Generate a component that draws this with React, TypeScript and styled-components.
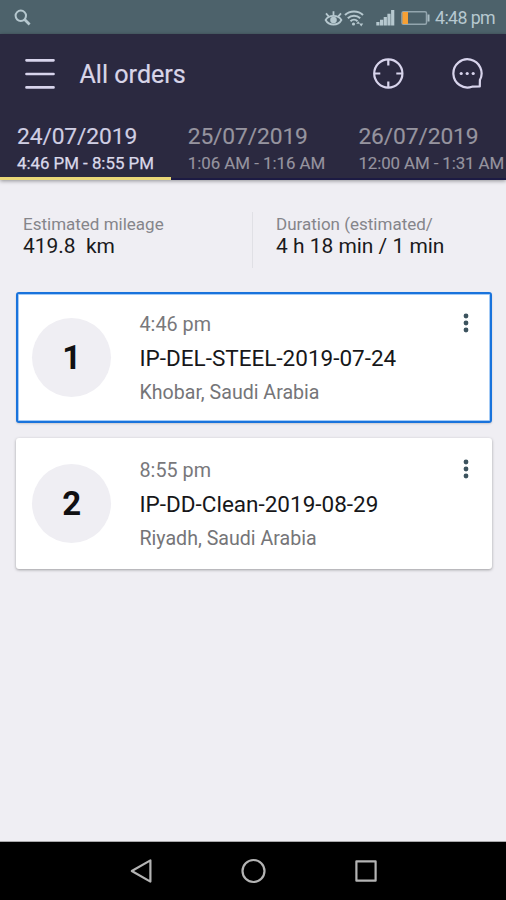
import React from 'react';
import styled, { createGlobalStyle } from 'styled-components';

const GlobalStyle = createGlobalStyle`
  *, *::before, *::after { box-sizing: border-box; }
  body { margin: 0; background: #efeef3; font-family: Roboto, sans-serif; }
`;

const Screen = styled.div`
  width: 506px;
  height: 900px;
  display: flex;
  flex-direction: column;
  overflow: hidden;
  background: #efeef3;
`;

const StatusBar = styled.div`
  flex: none;
  height: 34px;
  padding: 1px 11px 0 14px;
  display: flex;
  align-items: center;
  justify-content: space-between;
  background: #4d626b;
  color: #b6c8cf;
`;

const StatusIcons = styled.div`
  display: flex;
  align-items: center;
`;

const SignalSlot = styled.span`
  display: flex;
  margin: 0 6px 0 12px;
`;

const Clock = styled.span`
  width: 60px;
  margin-left: 5px;
  padding-top: 1px;
  font-size: 17.8px;
  line-height: 22px;
  letter-spacing: -0.6px;
  white-space: nowrap;
`;

const Header = styled.header`
  flex: none;
  height: 146px;
  background: #2b2940;
  box-shadow: 0 1px 4px rgba(0, 0, 0, 0.4);
`;

const AppBar = styled.div`
  height: 80px;
  display: flex;
  align-items: center;
  padding: 0 23px 0 24px;
  color: #d8d4ec;
`;

const Title = styled.h1`
  flex: 1;
  margin: 2px 0 0 23.5px;
  font-size: 25.1px;
  line-height: 32px;
  font-weight: 400;
  -webkit-text-stroke: 0.2px;
  color: #d8d5e8;
`;

const IconButton = styled.button`
  display: flex;
  padding: 0;
  border: 0;
  background: none;
  color: inherit;
  & + & { margin-left: 47px; }
`;

const Tabs = styled.div`
  height: 66px;
  display: flex;
`;

const Tab = styled.div<{ $active?: boolean }>`
  flex: none;
  width: 170.7px;
  padding: 9px 0 0 17px;
  white-space: nowrap;
  color: ${(p) => (p.$active ? '#cfcee3' : '#96949f')};
  border-bottom: ${(p) => (p.$active ? '3px solid #ead778' : '2px solid #1c1a43')};
`;

const TabDate = styled.div`
  font-size: 22.8px;
  line-height: 27px;
  letter-spacing: -0.12px;
  -webkit-text-stroke: 0.15px;
`;

const TabHours = styled.div<{ $narrow?: boolean; $active?: boolean }>`
  margin-top: 1px;
  font-size: 16.9px;
  line-height: 24px;
  letter-spacing: ${(p) => (p.$narrow ? '-0.1px' : '-0.03px')};
  -webkit-text-stroke: 0.15px;
  ${(p) => p.$active && 'color: #dbd9ea; -webkit-text-stroke: 0.25px;'}
`;

const Main = styled.main`
  flex: 1;
  min-height: 0;
  border-bottom: 1px solid #a9a9ab;
`;

const Stats = styled.div`
  height: 112px;
  padding-top: 32px;
  display: grid;
  grid-template-columns: 253px 253px;
`;

const Stat = styled.div<{ $divided?: boolean }>`
  height: 56px;
  padding: 0.5px 0 0 23px;
  white-space: pre;
  border-right: ${(p) => (p.$divided ? '1px solid #e0e0e5' : '0')};
`;

const StatLabel = styled.div`
  font-size: 17px;
  line-height: 22px;
  color: #85858a;
`;

const StatValue = styled.div`
  font-size: 20.95px;
  line-height: 23px;
  color: #1a1a1c;
`;

const Orders = styled.div`
  display: flex;
  flex-direction: column;
  gap: 15px;
  padding: 0 14.5px 0 15.5px;
`;

const Card = styled.article<{ $selected?: boolean }>`
  height: 131px;
  display: flex;
  padding-right: 21px;
  border-radius: 3px;
  border: 2px solid ${(p) => (p.$selected ? '#1973dc' : '#fff')};
  background: #fff;
  box-shadow: ${(p) =>
    p.$selected
      ? 'inset 0 0 0 1px #a4cbf6, 0 1px 2px rgba(0, 0, 0, 0.15)'
      : '0 1px 3px rgba(0, 0, 0, 0.34)'};
`;

const Badge = styled.div`
  flex: none;
  width: 79px;
  height: 79px;
  margin: 23.5px 28.3px 0 14.7px;
  padding-top: 1px;
  border-radius: 50%;
  display: flex;
  align-items: center;
  justify-content: center;
  background: #efeef3;
  color: #101012;
  font-size: 33px;
  line-height: 40px;
  font-weight: 700;
`;

const Details = styled.div`
  flex: 1;
  padding-top: 19px;
  white-space: nowrap;
`;

const Time = styled.div`
  font-size: 19.8px;
  line-height: 24px;
  color: #78787b;
`;

const OrderName = styled.div`
  margin: 6px 0 7px;
  font-size: 22.5px;
  line-height: 30px;
  color: #171719;
`;

const Address = styled.div`
  font-size: 19.6px;
  line-height: 26px;
  color: #757578;
`;

const MoreButton = styled(IconButton)`
  align-self: flex-start;
  margin-top: 18px;
  color: #3c535e;
`;

const NavBar = styled.nav`
  flex: none;
  height: 58px;
  display: flex;
  align-items: center;
  justify-content: center;
  gap: 84px;
  background: #000;
  color: #b4b4b4;
`;

const tabs = [
  { date: '24/07/2019', hours: '4:46 PM - 8:55 PM', active: true },
  { date: '25/07/2019', hours: '1:06 AM - 1:16 AM' },
  { date: '26/07/2019', hours: '12:00 AM - 1:31 AM', narrow: true },
];

const orders = [
  { time: '4:46 pm', name: 'IP-DEL-STEEL-2019-07-24', address: 'Khobar, Saudi Arabia', selected: true },
  { time: '8:55 pm', name: 'IP-DD-Clean-2019-08-29', address: 'Riyadh, Saudi Arabia' },
];

const SearchIcon = () => (
  <svg width="17" height="17" viewBox="0 0 17 17" fill="none" stroke="currentColor">
    <circle cx="6.8" cy="6.8" r="5.2" strokeWidth="2" />
    <path d="M10.6 10.6L15.6 15.4" strokeWidth="2.8" />
  </svg>
);

const EyeIcon = () => (
  <svg width="19" height="18" viewBox="0 0 19 18" fill="none" stroke="currentColor" strokeWidth="1.8">
    <path d="M1.6 11C3.2 8.2 6 6.8 9.5 6.8s6.300 1.400 7.900 4.200C15.800 14 13 15.500 9.500 15.500S3.200 14 1.600 11Z" />
    <path d="M9.500 6.500V2.200M4.800 7.600L2 4.400M14.200 7.600L17 4.400" />
    <circle cx="9.500" cy="11" r="2.400" fill="currentColor" />
  </svg>
);

const WifiIcon = () => (
  <svg width="21" height="18" viewBox="0 0 21 18" fill="none" stroke="currentColor" strokeWidth="2">
    <path d="M2 6C6.800 1.200 15.200 1.200 20 6" />
    <path d="M4.800 9.200c3.500-3.400 8.900-3.400 12.400 0" />
    <path d="M7.500 12.200c2-1.900 5-1.900 7 0" />
    <circle cx="10.500" cy="15" r="1.600" fill="currentColor" stroke="none" />
    <path d="M15.200 12.200l-2 2.600h4zM18.200 17.400l-2-2.800h4z" fill="currentColor" stroke="none" />
  </svg>
);

const SignalIcon = () => (
  <svg width="19" height="17" viewBox="0 0 19 17" fill="currentColor">
    <path d="M.3 13h3.200v3.500H.3zM4 10.800h3.200v5.700H4zM7.700 8h3.200v8.500H7.700zM11.400 4.800h3.200v11.700h-3.200zM15.100 1h3.200v15.500h-3.200z" />
  </svg>
);

const BatteryIcon = () => (
  <svg width="29" height="16" viewBox="0 0 29 16">
    <rect x="1" y="1.700" width="24.500" height="12.600" rx="1.500" fill="none" stroke="#93a5ae" strokeWidth="1.500" />
    <rect x="1.500" y="2" width="5.500" height="12" fill="#f7a034" />
    <path d="M26.500 4.500h2v7h-2z" fill="#a9bbc3" />
  </svg>
);

const MenuIcon = () => (
  <svg width="32" height="32" viewBox="0 0 32 32" fill="none" stroke="currentColor" strokeWidth="2.700" strokeLinecap="round">
    <path d="M2.500 2.300h27M2.500 16h27M2.500 29.400h27" />
  </svg>
);

const LocateIcon = () => (
  <svg width="32" height="32" viewBox="0 0 32 32" fill="none" stroke="currentColor" strokeWidth="2.200">
    <circle cx="16.300" cy="15.500" r="14.100" />
    <path d="M16.300 1.400v6.100M16.300 23.500v6.100M2.200 15.500h6.100M24.300 15.500h6.100" />
  </svg>
);

const ChatIcon = () => (
  <svg width="32" height="32" viewBox="0 0 32 32" fill="none" stroke="currentColor" strokeWidth="2.200" strokeLinejoin="round">
    <path d="M28.900 22A14.100 14.100 0 1 0 21 28.700L28.800 28.400Z" />
    <g fill="currentColor" stroke="none">
      <circle cx="10.200" cy="15.500" r="1.600" />
      <circle cx="16.200" cy="15.500" r="1.600" />
      <circle cx="22.200" cy="15.500" r="1.600" />
    </g>
  </svg>
);

const MoreIcon = () => (
  <svg width="6" height="22" viewBox="0 0 6 22" fill="currentColor">
    <circle cx="3" cy="4" r="2.400" />
    <circle cx="3" cy="11" r="2.400" />
    <circle cx="3" cy="18" r="2.400" />
  </svg>
);

const BackIcon = () => (
  <svg width="28" height="28" viewBox="0 0 28 28" fill="none" stroke="currentColor" strokeWidth="2.200" strokeLinejoin="round">
    <path d="M4.800 14L23.400 3.400V24.600Z" />
  </svg>
);

const HomeIcon = () => (
  <svg width="28" height="28" viewBox="0 0 28 28" fill="none" stroke="currentColor" strokeWidth="2.200">
    <circle cx="14.500" cy="14" r="11" />
  </svg>
);

const RecentIcon = () => (
  <svg width="28" height="28" viewBox="0 0 28 28" fill="none" stroke="currentColor" strokeWidth="2.200" strokeLinejoin="round">
    <rect x="5.400" y="4.300" width="19.200" height="19.400" />
  </svg>
);

export default function App() {
  return (
    <Screen>
      <GlobalStyle />
      <StatusBar>
        <SearchIcon />
        <StatusIcons>
          <EyeIcon />
          <WifiIcon />
          <SignalSlot><SignalIcon /></SignalSlot>
          <BatteryIcon />
          <Clock>4:48 pm</Clock>
        </StatusIcons>
      </StatusBar>
      <Header>
        <AppBar>
          <IconButton aria-label="Menu"><MenuIcon /></IconButton>
          <Title>All orders</Title>
          <IconButton aria-label="Locate"><LocateIcon /></IconButton>
          <IconButton aria-label="Messages"><ChatIcon /></IconButton>
        </AppBar>
        <Tabs>
          {tabs.map((t) => (
            <Tab key={t.date} $active={t.active}>
              <TabDate>{t.date}</TabDate>
              <TabHours $narrow={t.narrow} $active={t.active}>{t.hours}</TabHours>
            </Tab>
          ))}
        </Tabs>
      </Header>
      <Main>
        <Stats>
          <Stat $divided>
            <StatLabel>Estimated mileage</StatLabel>
            <StatValue>{'419.8  km'}</StatValue>
          </Stat>
          <Stat>
            <StatLabel>Duration (estimated/</StatLabel>
            <StatValue>4 h 18 min / 1 min</StatValue>
          </Stat>
        </Stats>
        <Orders>
          {orders.map((o, i) => (
            <Card key={o.name} $selected={o.selected}>
              <Badge>{i + 1}</Badge>
              <Details>
                <Time>{o.time}</Time>
                <OrderName>{o.name}</OrderName>
                <Address>{o.address}</Address>
              </Details>
              <MoreButton aria-label="More"><MoreIcon /></MoreButton>
            </Card>
          ))}
        </Orders>
      </Main>
      <NavBar>
        <BackIcon />
        <HomeIcon />
        <RecentIcon />
      </NavBar>
    </Screen>
  );
}
